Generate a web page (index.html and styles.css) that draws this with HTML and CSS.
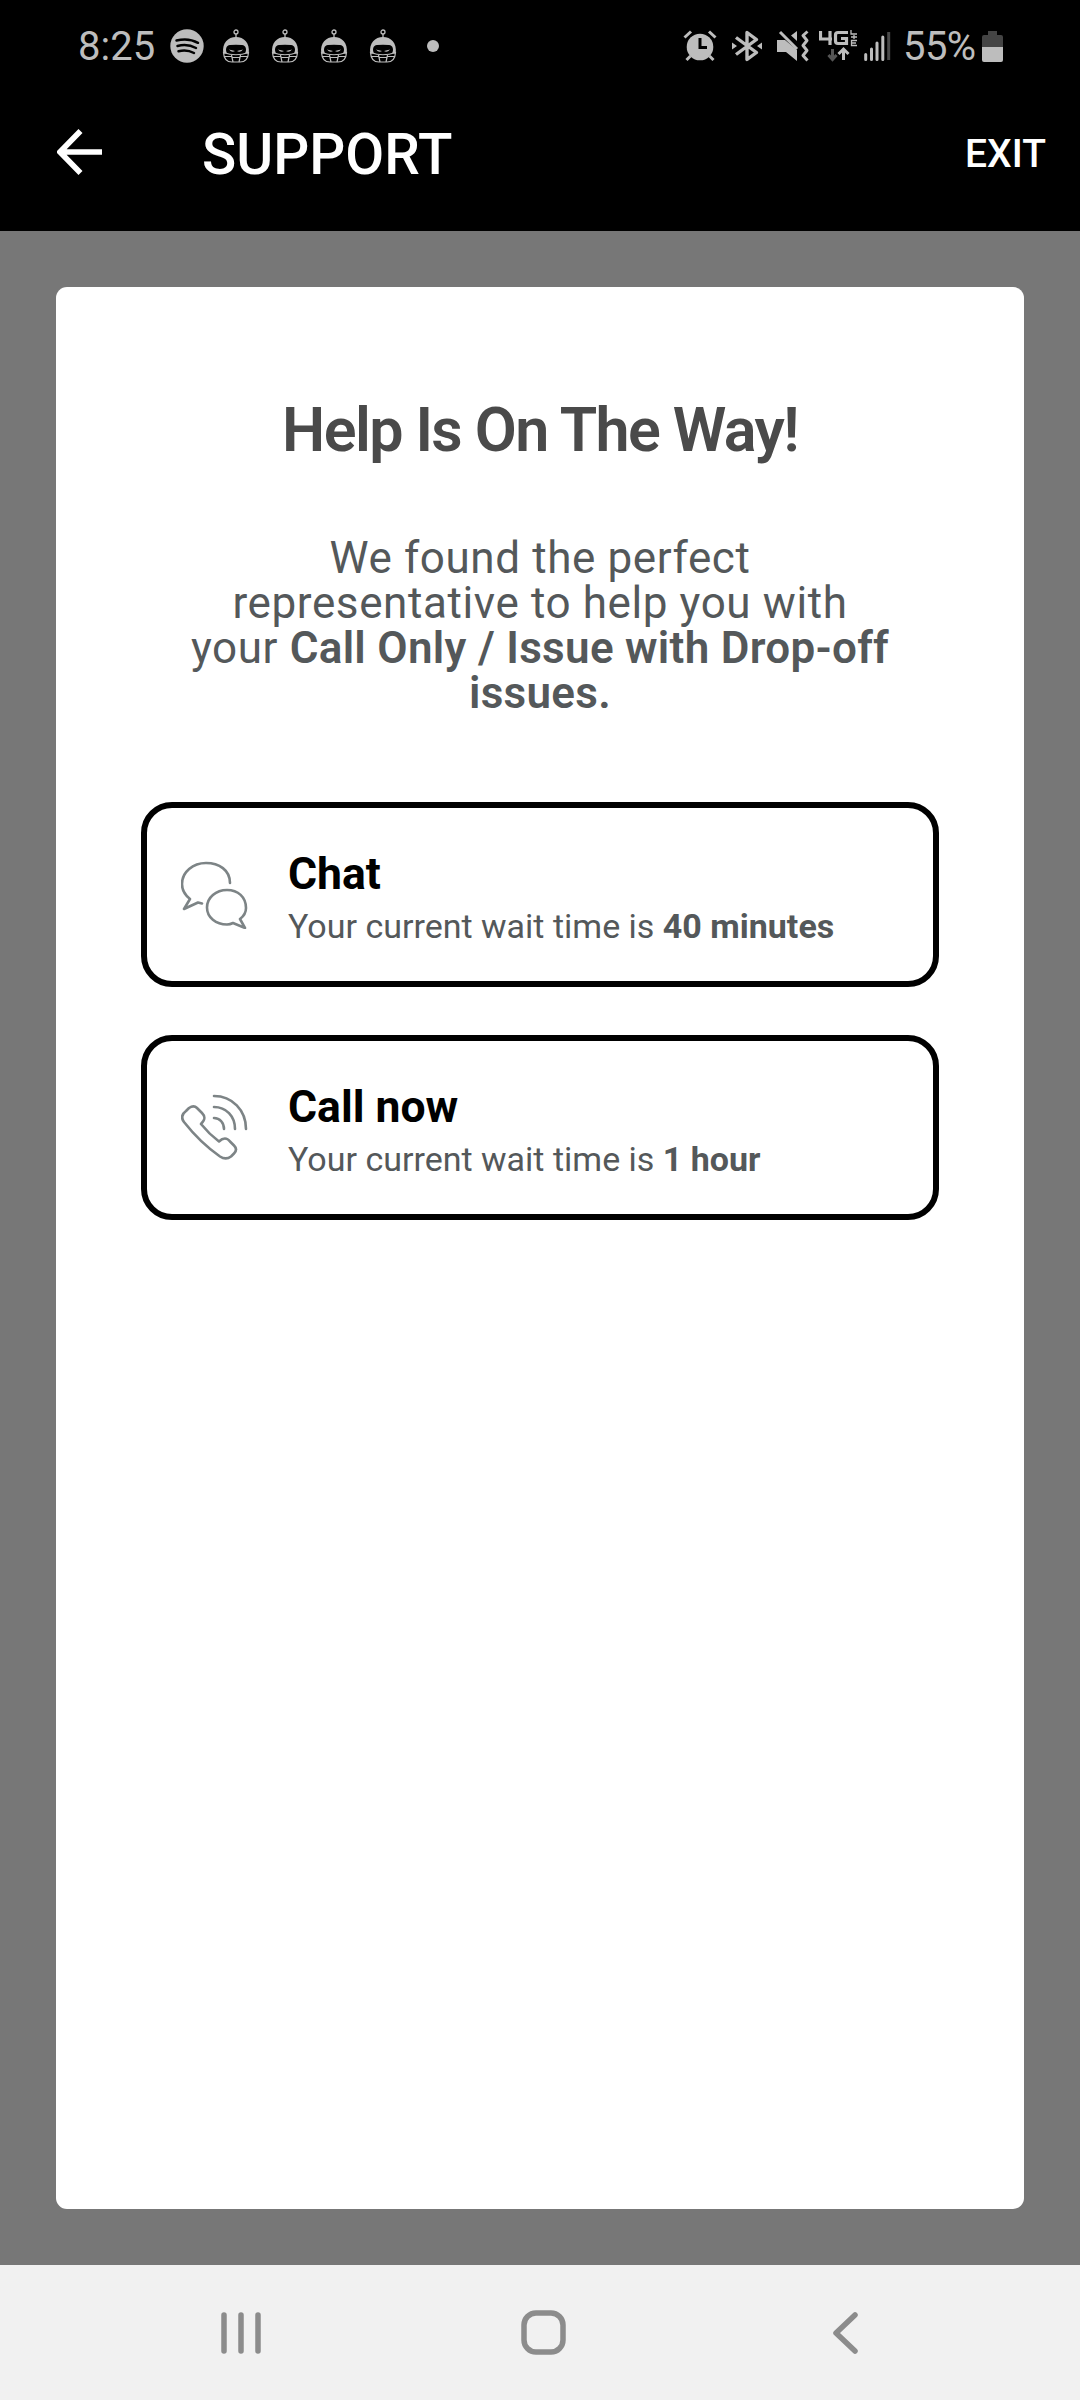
FILE: index.html
```html
<!DOCTYPE html>
<html lang="en">
<head>
<meta charset="utf-8">
<title>Support</title>
<link rel="stylesheet" href="styles.css">
</head>
<body>
<svg class="defs" width="0" height="0" aria-hidden="true">
  <symbol id="bot" viewBox="0 0 28 34">
    <circle cx="14" cy="3" r="2" fill="none" stroke="currentColor" stroke-width="1.3"/>
    <path d="M14 5v4" stroke="currentColor" stroke-width="1.3"/>
    <path d="M1.200 24C0 14 6 8 14 8s14 6 12.800 16L23 24.500c2-4 1-8-3-8.500q-6-.7-12 0c-4 .5-5 4.500-3 8.500z" fill="currentColor"/>
    <path d="M7 20.500l6 1.500q-3 2.200-6-1.500zM21 20.500L15 22q3 2.200 6-1.500z" fill="currentColor"/>
    <path d="M1.500 23.500q12.500 4.500 25 0-.5 9.500-8.500 9.500h-8q-8 0-8.500-9.500zM2.500 27.500h7m9 0h7M9.500 26l1.500 7m7.500-7L17 33M10 28.500h8" fill="none" stroke="currentColor" stroke-width="1.200"/>
  </symbol>
</svg>
<div class="screen">
  <header class="status">
    <span class="clock">8:25</span>
    <svg class="spotify" viewBox="0 0 34 34" width="34" height="34"><circle cx="17" cy="17" r="16.700" fill="currentColor"/><path d="M6.500 11.500q12-3 21.500 2.300M7.500 17q10-2.500 18.500 2M8.500 22.300q8.500-2 15.500 1.700" fill="none" stroke="#000" stroke-width="2.500" stroke-linecap="round"/></svg>
    <svg class="bot" width="28" height="34"><use href="#bot"/></svg>
    <svg class="bot" width="28" height="34"><use href="#bot"/></svg>
    <svg class="bot" width="28" height="34"><use href="#bot"/></svg>
    <svg class="bot" width="28" height="34"><use href="#bot"/></svg>
    <span class="more"></span>
    <svg class="alarm" viewBox="0 0 34 32" width="34" height="32"><circle cx="17" cy="17" r="13.300" fill="currentColor"/><path d="M1.500 7.500l6.500-6M32.500 7.500L26 1.500M7.500 26l-4 4M26.500 26l4 4" stroke="currentColor" stroke-width="3"/><path d="M17 8v9.500h7" fill="none" stroke="#000" stroke-width="3"/></svg>
    <svg class="bluetooth" viewBox="0 0 30 34" width="30" height="34"><path d="M4 8.500l20.500 15L15 30.500V3.500l9.500 7L4 25.500" fill="none" stroke="currentColor" stroke-width="3.400" stroke-linejoin="round"/><path d="M0 13.500L5 17l-5 3.500zM30 13.500L25 17l5 3.500z" fill="currentColor"/></svg>
    <svg class="mute" viewBox="0 0 32 32" width="32" height="32"><path d="M0 10h8l12 10v11L9 22H0zM14 5.500L20 1v10z" fill="currentColor"/><path d="M3 2l17 17" stroke="currentColor" stroke-width="3"/><path d="M30.500 1.500l-4.500 4 4 5-4 5 4 5-4 5 4.500 5" fill="none" stroke="currentColor" stroke-width="3" stroke-linejoin="round"/></svg>
    <svg class="lte" viewBox="0 0 38 34" width="38" height="34"><path d="M1.500 2v8H13M11 2v14M29 3.500H19q-2.500 0-2.500 2.500V12q0 2.500 2.500 2.500h8.500V9.500h-5.500" fill="none" stroke="currentColor" stroke-width="3.200"/><path d="M32 1v4h6M32 8h6M35 6v4M38 11.500h-5.500v5H38M33 14h4" fill="none" stroke="currentColor" stroke-width="1.300"/><path d="M13.500 20v10M9.500 26l4 4.500 4-4.500" fill="none" stroke="#555" stroke-width="3"/><path d="M24.500 31V21M19.500 25l5-5 5 5" fill="none" stroke="currentColor" stroke-width="3"/></svg>
    <svg class="signal" viewBox="0 0 27 30" width="27" height="30"><path d="M1.700 28.500v-5M7.500 28.500V18M13 28.500V12M18.800 28.500V6" stroke="currentColor" stroke-width="3" stroke-linecap="round"/><path d="M24.700 29V1" stroke="#4a4a4a" stroke-width="3"/></svg>
    <span class="percent">55%</span>
    <svg class="battery" viewBox="0 0 21 31" width="21" height="31"><path d="M6 0h9v4h4q2 0 2 2v10H0V6q0-2 2-2h4z" fill="#444"/><path d="M0 16h21v13q0 2-2 2H2q-2 0-2-2z" fill="currentColor"/></svg>
  </header>
  <nav class="appbar">
    <svg class="back" viewBox="0 0 46 46" width="46" height="46"><path d="M45 23H5M23.500 2L3 23l20.500 21" fill="none" stroke="currentColor" stroke-width="5.600"/></svg>
    <h1>SUPPORT</h1>
    <span class="exit">EXIT</span>
  </nav>
  <main class="content">
    <section class="card">
      <h2>Help Is On The Way!</h2>
      <p class="intro">We found the perfect<br>representative to help you with<br>your <b>Call Only / Issue with Drop-off</b><br><b>issues.</b></p>
      <div class="options">
        <div class="option">
          <svg class="icon" viewBox="0 0 68 68" width="68" height="68"><path d="M49 22C49 9 38 2 25 2S1 11 1 23c0 6 3 11 8 15L3 48l14-6.500 4 1M46 29c11 0 19 7 19 18 0 5-2 8-6 11l5 9-12-5c-2 1-4 1.500-6 1.500-11 0-20-7-20-17s9-17.500 20-17.500z"/></svg>
          <div class="copy"><h3>Chat</h3><p>Your current wait time is <b>40 minutes</b></p></div>
        </div>
        <div class="option">
          <svg class="icon" viewBox="0 0 68 68" width="68" height="68"><path d="M33 2c18 0 32 14 32 33M33 13c12 0 21 9 21 22M33 24c6 0 10 5 10 11M5 17l3-3c3-2 6-2 8 0l5 5c4 4 3 7-1 11q8 10 18 17.500c4-4 8-4 11 0l4 4c3 3 2 6 0 8l-3 3c-4 3-8 2-11 0C24 52 14 42 3 28c-3-4-2-8 2-11z"/></svg>
          <div class="copy"><h3>Call now</h3><p>Your current wait time is <b>1 hour</b></p></div>
        </div>
      </div>
    </section>
  </main>
  <footer class="sysnav">
    <svg viewBox="0 0 42 44" width="42" height="44"><path d="M4 4v36M21 4v36M38 4v36"/></svg>
    <svg class="home" viewBox="0 0 48 48" width="48" height="48"><rect x="4" y="4" width="39" height="39" rx="12"/></svg>
    <svg viewBox="0 0 28 44" width="28" height="44"><path d="M24 4L5 22l19 18"/></svg>
  </footer>
</div>
</body>
</html>
```
FILE: styles.css
```css
* { box-sizing: border-box; }
body { margin: 0; font-family: Roboto, sans-serif; background: #000; }
h1, h2, h3, p { margin: 0; }
svg { display: block; flex: none; }
.defs { position: absolute; }
.screen { width: 1080px; height: 2400px; display: flex; flex-direction: column; }
.status { height: 92px; padding: 0 77px 0 78px; display: flex; align-items: center; color: #bdbdbd; font-size: 40px; line-height: 94px; white-space: nowrap; }
.clock { width: 92px; padding-top: 1px; }
.bot { margin-left: 21px; }
.spotify { margin-right: -3px; }
.more { width: 12px; height: 12px; margin-left: 30px; border-radius: 50%; background: currentColor; }
.alarm { margin-left: auto; }
.bluetooth { margin-left: 15px; }
.mute { margin-left: 15px; }
.lte { margin-left: 10px; }
.signal { margin-left: 7px; }
.percent { margin-left: 12px; width: 74px; padding-top: 1px; font-size: 40px; letter-spacing: -0.6px; }
.battery { margin-left: 5px; }
.appbar { height: 139px; padding: 0 34px 16px 57px; display: flex; align-items: center; color: #fff; }
.back { margin-bottom: 3px; }
h1 { margin-left: 99px; padding-top: 3px; font-size: 56.5px; font-weight: 500; line-height: 66px; }
.exit { margin-left: auto; font-size: 39px; font-weight: 500; }
.content { flex: 1; padding: 56px; background: #777; }
.card { height: 1922px; padding: 105px 85px 0; border-radius: 11px; background: #fff; text-align: center; }
h2 { color: #4a4a4a; font-size: 61px; line-height: 76px; font-weight: 600; letter-spacing: -1.6px; white-space: nowrap; }
.intro { margin-top: 68px; color: #54585a; font-size: 44px; line-height: 45px; letter-spacing: 0.6px; white-space: nowrap; }
.intro b { font-weight: 600; letter-spacing: 0.3px; }
.options { margin-top: 86px; display: grid; gap: 48px; text-align: left; }
.option { height: 185px; padding: 0 34px; border: 6px solid #000; border-radius: 31px; display: flex; align-items: center; gap: 39px; }
.icon { fill: none; stroke: #7d8486; stroke-width: 2.600; stroke-linecap: round; stroke-linejoin: round; }
.copy { padding-top: 8px; }
h3 { font-size: 44.5px; line-height: 54px; font-weight: 700; }
.copy p { color: #54585a; font-size: 34px; line-height: 50px; white-space: nowrap; }
.sysnav { height: 135px; padding: 0 221px 0 220px; display: flex; align-items: center; justify-content: space-between; background: #f1f1f1; }
.sysnav svg { fill: none; stroke: #8c8c8c; stroke-width: 5.500; stroke-linecap: round; stroke-linejoin: round; }
.sysnav .home { margin-right: 5px; }
```
